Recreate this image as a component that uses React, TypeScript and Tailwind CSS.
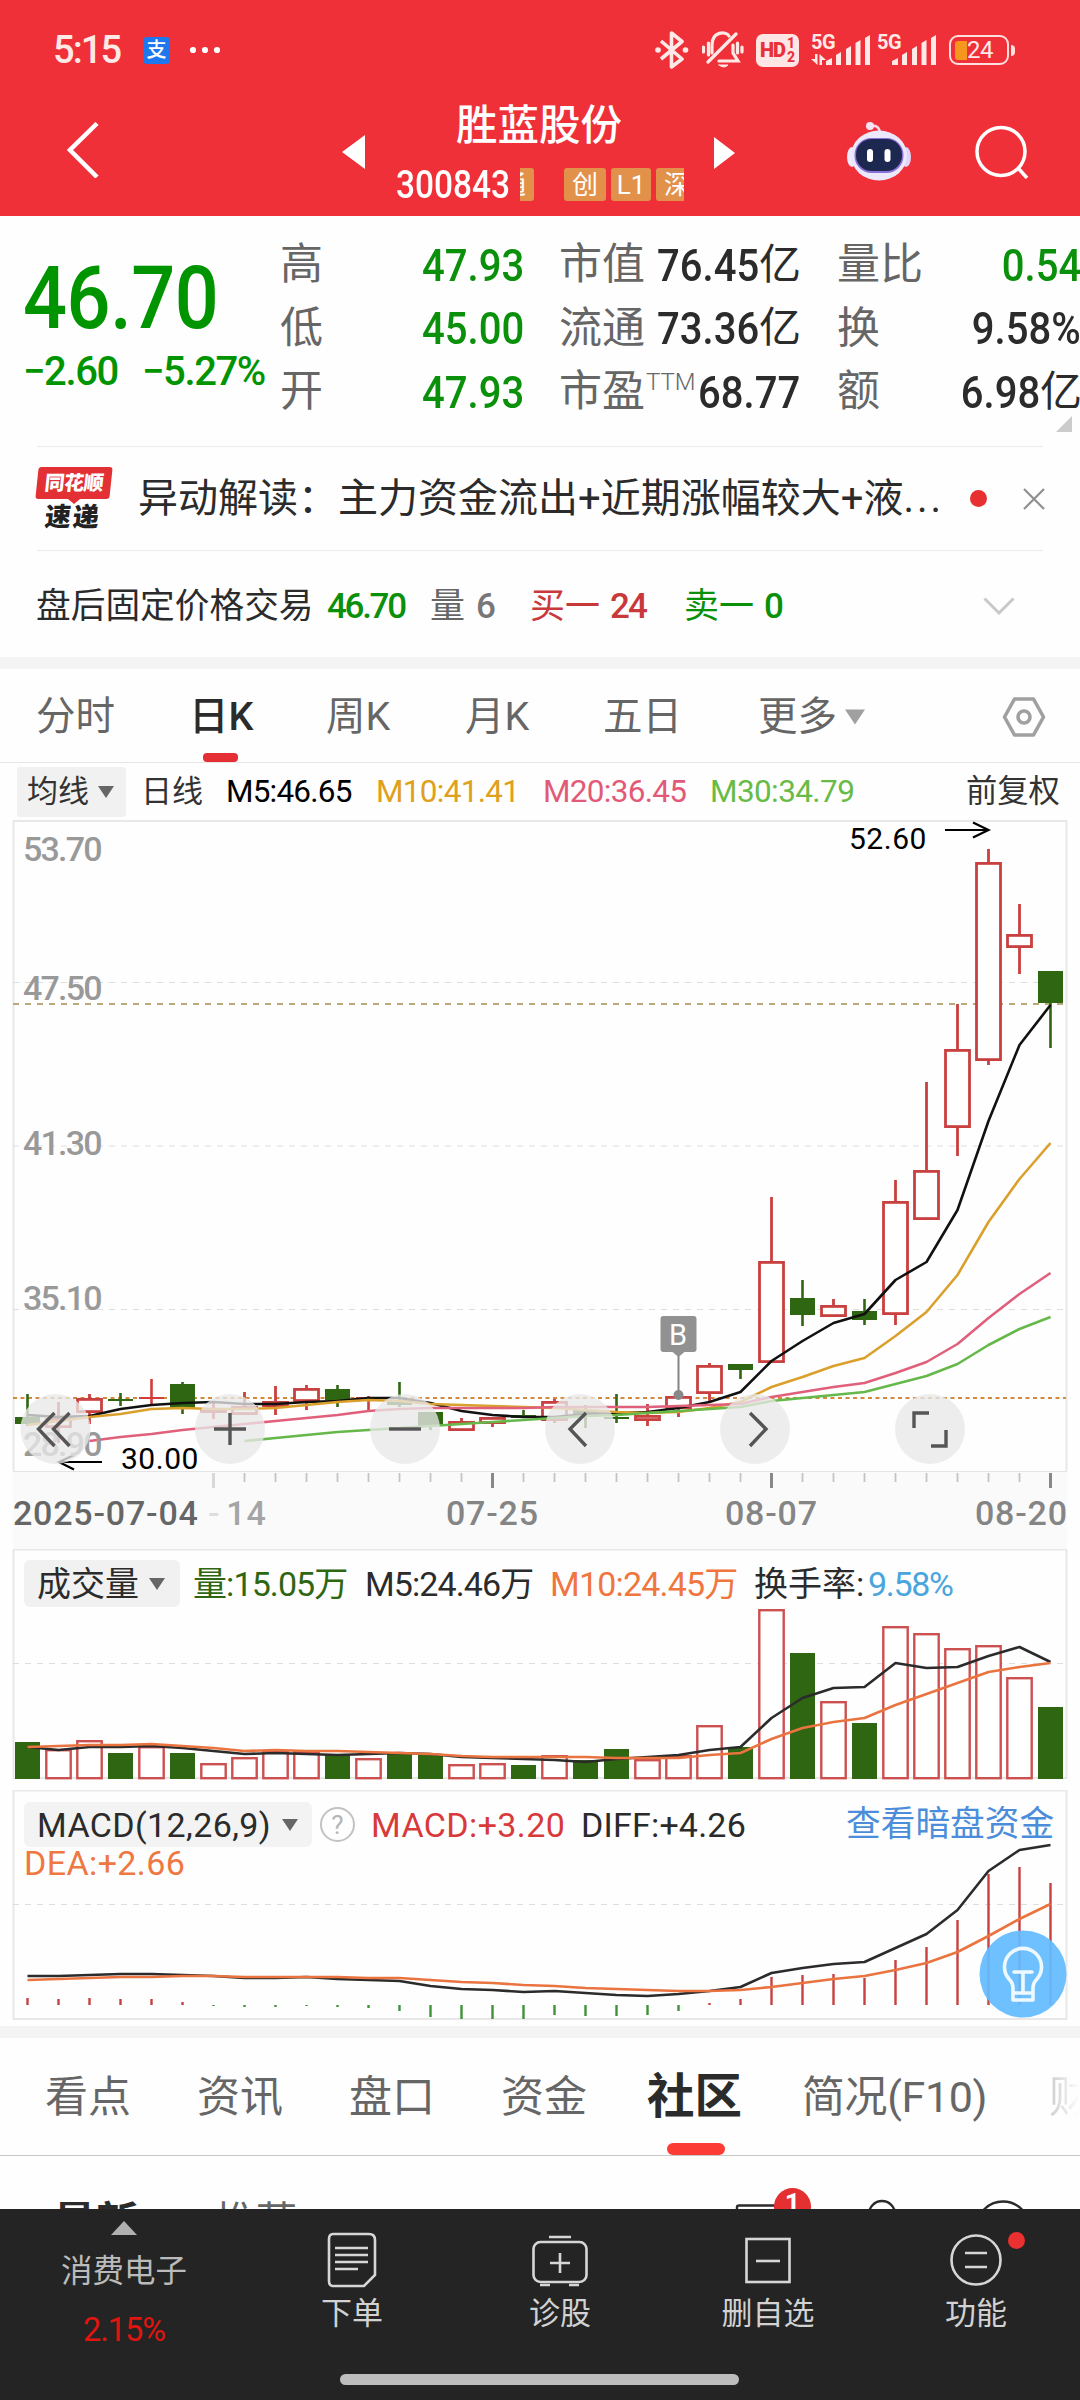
import clsx from 'clsx';
import type { ReactNode } from 'react';

type Kind = 'up' | 'down';

interface Candle {
  kind: Kind;
  high: number;
  top: number;
  bottom: number;
  low: number;
}

const UP = '#c8403f';
const DOWN = '#2f6612';
const STEP = 31;
const FIRST_X = 27.5;

const xAt = (i: number) => FIRST_X + i * STEP;

const k = (
  kind: Kind,
  high: number,
  top: number,
  bottom: number,
  low: number,
): Candle => ({ kind, high, top, bottom, low });

const candles: Candle[] = [
  k('down', 1394, 1417, 1424, 1426),
  k('up', 1402, 1418, 1428, 1443),
  k('up', 1394, 1398, 1413, 1424),
  k('down', 1393, 1399, 1401, 1406),
  k('up', 1379, 1397, 1399, 1404),
  k('down', 1382, 1384, 1408, 1414),
  k('up', 1403, 1408, 1413, 1419),
  k('up', 1392, 1406, 1415, 1415),
  k('up', 1386, 1401, 1407, 1415),
  k('up', 1385, 1388, 1402, 1410),
  k('down', 1385, 1389, 1400, 1407),
  k('up', 1396, 1397, 1399, 1410),
  k('down', 1382, 1400, 1405, 1407),
  k('down', 1412, 1412, 1426, 1430),
  k('up', 1418, 1421, 1431, 1431),
  k('up', 1417, 1417, 1424, 1427),
  k('down', 1410, 1415, 1418, 1418),
  k('up', 1399, 1401, 1421, 1423),
  k('down', 1405, 1410, 1415, 1428),
  k('down', 1394, 1417, 1419, 1423),
  k('up', 1404, 1415, 1421, 1426),
  k('up', 1396, 1396, 1409, 1417),
  k('up', 1363, 1365, 1394, 1402),
  k('down', 1364, 1364, 1370, 1379),
  k('up', 1197, 1261, 1363, 1363),
  k('down', 1280, 1298, 1315, 1326),
  k('up', 1299, 1305, 1317, 1317),
  k('down', 1299, 1311, 1320, 1325),
  k('up', 1180, 1201, 1315, 1325),
  k('up', 1082, 1170, 1220, 1220),
  k('up', 1004, 1049, 1128, 1156),
  k('up', 849, 862, 1061, 1065),
  k('up', 904, 934, 948, 974),
  k('down', 971, 971, 1003, 1048),
];

const ma5 = [
  1415, 1417, 1416, 1409, 1405, 1403, 1402, 1404, 1404, 1402, 1401, 1398, 1398,
  1403, 1411, 1415, 1417, 1417, 1414, 1413, 1412, 1408, 1402, 1392, 1361, 1341,
  1323, 1314, 1280, 1262, 1210, 1121, 1045, 1005,
];
const ma10 = [
  1425, 1421, 1417, 1414, 1409, 1408, 1409, 1409, 1408, 1405, 1402, 1400, 1401,
  1404, 1405, 1406, 1407, 1408, 1410, 1412, 1413, 1412, 1408, 1402, 1387, 1377,
  1366, 1358, 1336, 1312, 1275, 1222, 1179, 1143,
];
// starts at the third candle
const ma20 = [
  1441, 1437, 1434, 1430, 1427, 1424, 1421, 1418, 1415, 1411, 1409, 1408, 1408,
  1408, 1408, 1407, 1407, 1407, 1407, 1406, 1405, 1404, 1397, 1392, 1387, 1383,
  1373, 1362, 1344, 1318, 1294, 1273,
];
// starts at the eighth candle
const ma30 = [
  1441, 1438, 1435, 1432, 1430, 1428, 1426, 1424, 1422, 1420, 1418, 1416, 1415,
  1413, 1411, 1409, 1407, 1401, 1398, 1395, 1392, 1384, 1376, 1364, 1345, 1329,
  1317,
];

const volumes = [
  1742, 1749, 1740, 1753, 1746, 1753, 1763, 1757, 1750, 1751, 1754, 1758, 1754,
  1755, 1764, 1763, 1765, 1755, 1760, 1749, 1759, 1755, 1725, 1747, 1609, 1653,
  1701, 1723, 1626, 1633, 1648, 1645, 1677, 1707,
];
const vol5 = [
  1747, 1750, 1747, 1747, 1746, 1748, 1751, 1754, 1753, 1754, 1755, 1754, 1753,
  1754, 1757, 1758, 1759, 1760, 1762, 1759, 1757, 1755, 1750, 1747, 1718, 1698,
  1688, 1687, 1663, 1668, 1667, 1656, 1647, 1662,
];
const vol10 = [
  1747, 1746, 1745, 1745, 1744, 1746, 1748, 1751, 1750, 1751, 1751, 1752, 1753,
  1754, 1756, 1757, 1757, 1757, 1757, 1758, 1758, 1758, 1755, 1753, 1739, 1728,
  1722, 1718, 1705, 1694, 1683, 1672, 1667, 1663,
];

const MACD_ZERO = 2005;
const macdBars = [
  1998, 1999, 1998, 1999, 1999, 2002, 2006, 2007, 2007, 2006, 2007, 2008, 2011,
  2017, 2019, 2019, 2019, 2015, 2016, 2016, 2015, 2011, 2003, 1999, 1977, 1975,
  1974, 1978, 1960, 1947, 1920, 1874, 1867, 1883,
];
const diff = [
  1976, 1976, 1975, 1974, 1974, 1975, 1976, 1978, 1978, 1977, 1979, 1980, 1981,
  1986, 1989, 1990, 1992, 1991, 1993, 1995, 1996, 1994, 1991, 1987, 1973, 1968,
  1964, 1962, 1948, 1934, 1910, 1871, 1850, 1845,
];
const dea = [
  1980, 1979, 1978, 1977, 1977, 1976, 1976, 1977, 1977, 1977, 1977, 1978, 1978,
  1980, 1982, 1983, 1985, 1986, 1988, 1989, 1990, 1991, 1991, 1990, 1987, 1983,
  1979, 1976, 1970, 1963, 1952, 1936, 1919, 1904,
];

function Line({
  data,
  from = 0,
  color,
}: {
  data: number[];
  from?: number;
  color: string;
}) {
  return (
    <polyline
      points={data.map((y, i) => `${xAt(i + from)},${y}`).join(' ')}
      fill="none"
      stroke={color}
      strokeWidth="2.6"
      strokeLinejoin="round"
    />
  );
}

function Grid({ ys }: { ys: number[] }) {
  return (
    <>
      {ys.map((y) => (
        <path
          key={y}
          d={`M13 ${y}H1066`}
          stroke="#dedede"
          strokeWidth="1.2"
          strokeDasharray="6 6"
        />
      ))}
    </>
  );
}

function Caret({ className }: { className?: string }) {
  return (
    <svg
      viewBox="0 0 16 12"
      className={clsx('h-3 w-4 shrink-0 fill-[#666]', className)}
    >
      <path d="M0 0H16L8 12Z" />
    </svg>
  );
}

function StatusBar() {
  return (
    <div className="flex h-[100px] items-center pl-[53px] text-[#ffe9e7]">
      <span className="w-[90px] text-[38px] font-medium tracking-[-1.9px]">
        5:15
      </span>
      <span className="flex size-[27px] items-center justify-center rounded-sm bg-[#1d77ee] text-[20px] font-medium text-white">
        支
      </span>
      <svg viewBox="0 0 36 8" className="ml-[18px] h-2 w-9 fill-white">
        <circle cx="5" cy="4" r="3.1" />
        <circle cx="17" cy="4" r="3.1" />
        <circle cx="29" cy="4" r="3.1" />
      </svg>
      {/* bluetooth */}
      <svg
        viewBox="0 0 34 38"
        className="ml-[431px] h-[38px] w-[34px] shrink-0"
        fill="none"
        stroke="currentColor"
        strokeWidth="3.6"
        strokeLinejoin="round"
      >
        <path d="M6 10 27 28 16.5 36V2L27 10.5 6 28" />
        <circle cx="3" cy="19" r="2.8" fill="currentColor" stroke="none" />
        <circle cx="30.5" cy="19" r="2.8" fill="currentColor" stroke="none" />
      </svg>
      {/* muted bell */}
      <svg
        viewBox="0 0 42 38"
        className="ml-[13px] h-[38px] w-[42px] shrink-0"
        fill="none"
        stroke="currentColor"
        strokeWidth="3.2"
        strokeLinecap="round"
      >
        <path d="M34 3 6 31M10 22V14C10 0 24 0 27 5M17 30H36L31 22V14" />
        <path d="M1.5 16V21M6.5 12V24M35.5 12V22M40 16V21" />
        <path d="M17 34H26Q22 38 17 34Z" fill="currentColor" strokeWidth="1" />
      </svg>
      <div className="ml-3 flex h-[33px] w-[43px] shrink-0 items-center justify-center rounded-[7px] bg-[#ffe5e3] text-[#e83038]">
        <span className="text-[20px] font-black tracking-[-1px]">HD</span>
        <span className="flex flex-col pl-0.5 text-[14px] font-extrabold">
          <i className="not-italic">1</i>
          <i className="not-italic">2</i>
        </span>
      </div>
      <Signal arrows className="ml-3" />
      <Signal className="ml-1.5" />
      <div className="ml-3 flex h-[30px] w-[60px] shrink-0 items-center rounded-[9px] border-[2.5px] border-[#ffe0de] pl-1">
        <span className="h-[19px] w-3 rounded-l-[3px] bg-[#f7961e]" />
        <span className="text-[24px] tracking-[-0.5px]">24</span>
      </div>
      <span className="ml-0.5 h-[11px] w-1 rounded-r bg-[#ffe0de]" />
    </div>
  );
}

function Signal({
  arrows,
  className,
}: {
  arrows?: boolean;
  className?: string;
}) {
  return (
    <div className={clsx('relative h-[34px] w-[60px] shrink-0', className)}>
      <span className="absolute -top-px left-0 text-[20px] font-bold tracking-[-0.5px]">
        5G
      </span>
      <svg viewBox="0 0 60 34" className="size-full fill-current">
        <path d="M15 32V28L21 25V32ZM25 22 30 19V32H25ZM35 16 40 13V32H35ZM44.5 10 49.5 7V32H44.5ZM54 5 59 2V32H54Z" />
        {arrows && <path d="M4 21H6.5V32L0 26H4ZM8.5 21 15 27H11V32H8.5Z" />}
      </svg>
    </div>
  );
}

function Tag({ children, className }: { children: ReactNode; className?: string }) {
  return (
    <span
      className={clsx(
        'flex h-[33px] shrink-0 items-center justify-center rounded-[3px] bg-[#e2914b] text-[26px]',
        className,
      )}
    >
      {children}
    </span>
  );
}

function NavBar() {
  return (
    <div className="flex h-[116px] text-white">
      <svg
        viewBox="0 0 32 56"
        className="mt-[22px] ml-[67px] h-14 w-8"
        fill="none"
        stroke="currentColor"
        strokeWidth="4.5"
      >
        <path d="M30 1.5 3 28 30 55" />
      </svg>
      <svg viewBox="0 0 23 34" className="mt-[35px] ml-[243px] h-[34px] w-[23px] fill-white">
        <path d="M23 0V34L0 17Z" />
      </svg>
      <div className="ml-[31px] flex w-[288px] flex-col">
        <h1 className="mt-[5px] pl-[60px] text-[41.5px] font-medium">胜蓝股份</h1>
        <div className="mt-[19px] flex h-[38px] items-center overflow-hidden">
          <span className="w-[124px] shrink-0 pt-px">
            <span className="inline-block w-[128px] origin-left scale-x-[0.88] text-[38px] font-medium">
              300843
            </span>
          </span>
          <span className="flex h-[33px] w-3.5 shrink-0 items-center justify-end overflow-hidden rounded-r-[3px] bg-[#e2914b] text-[26px]">
            <span className="mr-[8px]">通</span>
          </span>
          <Tag className="ml-[30px] w-[42px]">创</Tag>
          <Tag className="ml-[5px] w-10">L1</Tag>
          <Tag className="ml-[5px] w-[42px]">深</Tag>
        </div>
      </div>
      <svg viewBox="0 0 21 32" className="mt-[37px] ml-[30px] h-8 w-[21px] fill-white">
        <path d="M0 0V32L21 16Z" />
      </svg>
      <svg viewBox="0 0 64 60" className="mt-[21px] ml-[112px] h-[60px] w-16">
        <path d="M33 12Q32 3 23 5" fill="none" stroke="#f3dcf2" strokeWidth="2.5" />
        <circle cx="23" cy="5" r="4" fill="#f6e3f6" />
        <ellipse cx="5" cy="36" rx="5" ry="10" fill="#f1eafd" />
        <ellipse cx="59" cy="36" rx="5" ry="10" fill="#ddd5fa" />
        <ellipse cx="32" cy="34.5" rx="28" ry="25" fill="#ece8fb" />
        <rect x="7.5" y="17" width="49" height="35" rx="17" fill="#8a6fd8" />
        <rect x="9" y="18" width="46" height="32" rx="15.5" fill="#1d2850" />
        <rect x="20" y="28" width="6" height="13" rx="3" fill="#fff" />
        <rect x="37.5" y="28" width="6" height="13" rx="3" fill="#fff" />
      </svg>
      <svg
        viewBox="0 0 54 54"
        className="mt-[25px] ml-16 size-[54px]"
        fill="none"
        stroke="currentColor"
        strokeWidth="3.5"
      >
        <circle cx="26" cy="26.5" r="24" />
        <path d="M43 43 52 53" />
      </svg>
    </div>
  );
}

const gray = 'text-[#666]';

function Quote() {
  return (
    <section className="relative flex h-[230px]">
      <div className="w-[280px] shrink-0 pl-[23px] text-[#009500]">
        <p className="mt-[38px] w-[221px] origin-left scale-x-[0.88] text-[88px] font-medium tracking-[-0.5px]">
          46.70
        </p>
        <p className="mt-[10px] flex text-[40px] font-medium tracking-[-1.4px] whitespace-nowrap">
          <span className="w-[119px]">−2.60</span>
          <span>−5.27%</span>
        </p>
      </div>
      <div className="mt-[17px] grid h-[190px] w-[800px] shrink-0 grid-cols-[244px_35px_241px_37px_244px] text-[43px]">
        <div className="flex flex-col justify-between">
          <Row label="高" value="47.93" green />
          <Row label="低" value="45.00" green />
          <Row label="开" value="47.93" green />
        </div>
        <div />
        <div className="flex flex-col justify-between">
          <Row label="市值" value="76.45" unit="亿" />
          <Row label="流通" value="73.36" unit="亿" />
          <Row
            label={
              <>
                市盈
                <sup className="relative top-[-16px] ml-px align-baseline text-[24px] leading-none font-light">
                  TTM
                </sup>
              </>
            }
            value="68.77"
          />
        </div>
        <div />
        <div className="flex flex-col justify-between">
          <Row label="量比" value="0.54" green />
          <Row label="换" value="9.58%" />
          <Row label="额" value="6.98" unit="亿" />
        </div>
      </div>
      <svg
        viewBox="0 0 16 16"
        className="absolute right-2 bottom-3.5 size-4 fill-[#ccc]"
      >
        <path d="M16 0V16H0Z" />
      </svg>
    </section>
  );
}

function Row({
  label,
  value,
  unit,
  green,
}: {
  label: ReactNode;
  value: string;
  unit?: string;
  green?: boolean;
}) {
  return (
    <div className="flex h-[63px] items-center justify-between whitespace-nowrap">
      <span className={clsx('shrink-0', gray)}>{label}</span>
      <span
        className={clsx(
          '-ml-3 flex items-center font-medium',
          green ? 'text-[#0a900a]' : 'text-[#2b2b2b]',
        )}
      >
        <span className="origin-right scale-x-[0.91] pt-[2px] text-[44px]">{value}</span>
        {unit && <span className="w-[41px] text-[42px] font-normal">{unit}</span>}
      </span>
    </div>
  );
}

function News() {
  return (
    <section className="mx-[37px] flex h-[105px] items-center border-y border-[#ececec]">
      <div className="w-[101px] shrink-0">
        <div className="flex h-8 w-[74px] -skew-x-6 items-center justify-center rounded-[3px] bg-[#e23034] text-[20px] font-black tracking-[-0.5px] text-white">
          同花顺
        </div>
        <div className="ml-[31px] size-0 border-x-[6px] border-t-[5px] border-x-transparent border-t-[#e23034]" />
        <div className="ml-2 -skew-x-6 text-[26px] font-black tracking-[2px] text-[#222]">
          速递
        </div>
      </div>
      <p className="w-[822px] shrink-0 text-[40px] whitespace-nowrap text-[#2b2b2b]">
        异动解读：主力资金流出+近期涨幅较大+液
        <span className="tracking-[3px]">...</span>
      </p>
      <span className="ml-[10px] size-[17px] shrink-0 rounded-full bg-[#e93030]" />
      <svg
        viewBox="0 0 22 22"
        className="ml-9 size-[22px] shrink-0"
        stroke="#8f8f8f"
        strokeWidth="2.2"
      >
        <path d="M1 1 21 21M21 1 1 21" />
      </svg>
    </section>
  );
}

function AfterHours() {
  return (
    <section className="flex h-[106px] items-center pt-1 pl-[36px] text-[35px] whitespace-nowrap">
      <span className="w-[291px] text-[34.7px] text-[#2b2b2b]">盘后固定价格交易</span>
      <span className="w-[103px] font-medium tracking-[-2.3px] text-[#0a900a]">46.70</span>
      <span className={clsx('w-[46px]', gray)}>量</span>
      <span className="w-[54px] font-medium text-[#777]">6</span>
      <span className="w-[80px] text-[#c8393b]">买一</span>
      <span className="w-[74px] font-medium tracking-[-2px] text-[#c8393b]">24</span>
      <span className="w-[80px] text-[#0a900a]">卖一</span>
      <span className="font-medium text-[#0a900a]">0</span>
      <svg
        viewBox="0 0 32 18"
        className="ml-[199px] h-[18px] w-8"
        fill="none"
        stroke="#c9c9c9"
        strokeWidth="3"
      >
        <path d="M1.5 1.5 16 16 30.5 1.5" />
      </svg>
    </section>
  );
}

function PeriodTabs() {
  return (
    <nav
      className={clsx(
        'flex h-[94px] items-center border-b border-[#e6e6e6] pt-0.5 pl-[36px] text-[39.5px] whitespace-nowrap',
        gray,
      )}
    >
      <span className="w-[153px]">分时</span>
      <span className="relative w-[137px] font-medium text-[#2b2b2b]">
        日K
        <i className="absolute top-[56px] left-3.5 h-[9px] w-[35px] rounded bg-[#e43035]" />
      </span>
      <span className="w-[139px]">周K</span>
      <span className="w-[138px]">月K</span>
      <span className="w-[155px]">五日</span>
      <span>更多</span>
      <Caret className="ml-2 h-4 w-5 fill-[#a0a0a0]" />
      <svg
        viewBox="0 0 44 42"
        className="ml-[137px] h-[42px] w-11"
        fill="none"
        stroke="#a0a0a0"
        strokeWidth="3.6"
        strokeLinejoin="round"
      >
        <path d="M12.5 3H31.5L41.5 21 31.5 39H12.5L2.5 21Z" />
        <circle cx="22" cy="21" r="6" />
      </svg>
    </nav>
  );
}

function MaLegend() {
  return (
    <div className="flex h-[57px] items-center pl-[17px] text-[31.5px] whitespace-nowrap">
      <span className="flex h-[50px] w-[124px] items-center text-[31px] text-[#333]">
        <span className="flex h-full w-[109px] items-center rounded-[3px] bg-[#f1f1f1] pl-2.5">
          均线
          <Caret className="ml-[9px]" />
        </span>
      </span>
      <span className="w-[85px] text-[31px] text-[#333]">日线</span>
      <span className="w-[150px] tracking-[-0.8px] text-black">M5:46.65</span>
      <span className="w-[167px] tracking-[-0.7px] text-[#dfa01c]">M10:41.41</span>
      <span className="w-[167px] tracking-[-0.7px] text-[#e25a78]">M20:36.45</span>
      <span className="w-[256px] tracking-[-0.6px] text-[#68bb47]">M30:34.79</span>
      <span className="text-[31.3px] text-[#333]">前复权</span>
    </div>
  );
}

const priceLabels = [
  { text: '53.70', cls: 'top-[12px]' },
  { text: '47.50', cls: 'top-[151px]' },
  { text: '41.30', cls: 'top-[306px]' },
  { text: '35.10', cls: 'top-[461px]' },
  { text: '28.90', cls: 'top-[607px]' },
];

const chartButtons = [
  { x: 55.5, d: 'M-1-16-17 0-1 17M14-16-2 0 14 17' },
  { x: 230, d: 'M-16 0H16M0-16V16' },
  { x: 405, d: 'M-16 0H16' },
  { x: 580, d: 'M6-16-10 0 6 17' },
  { x: 755, d: 'M-5-16 11 0-5 17' },
  { x: 930, d: 'M-16-1V-16H-1M16 1V17H1' },
];

function PriceChart() {
  return (
    <div className="relative h-[652px]">
      <svg viewBox="0 820 1080 652" className="block h-[652px] w-[1080px]">
        <path d="M13.5 1471V821H1066.5V1471" fill="none" stroke="#e8e8e8" strokeWidth="2" />
        <path d="M13 1471.5H1067" stroke="#e4e4e4" />
        <Grid ys={[982.5, 1146, 1309.5]} />
        <path d="M13 1004H1066" stroke="#bba878" strokeWidth="2" strokeDasharray="6 6" />
        <path d="M13 1398H1066" stroke="#d48a3c" strokeWidth="2" strokeDasharray="4 3.5" />
        {candles.map((c, i) => {
          const x = xAt(i);
          const thin = c.bottom - c.top < 4;
          if (c.kind === 'down' || thin) {
            const color = c.kind === 'down' ? DOWN : '#d23c3c';
            return (
              <g key={i} fill={color}>
                <rect x={x - 1.3} y={c.high} width="2.6" height={c.low - c.high} />
                <rect x={x - 12.5} y={c.top} width="25" height={c.bottom - c.top} />
              </g>
            );
          }
          return (
            <g key={i} fill="none" stroke={UP} strokeWidth="2.8">
              <path d={`M${x} ${c.high}V${c.top}M${x} ${c.bottom}V${c.low}`} />
              <rect
                x={x - 12}
                y={c.top + 1.4}
                width="24"
                height={c.bottom - c.top - 2.8}
                fill="#fff"
              />
            </g>
          );
        })}
        <Line data={ma5} color="#111" />
        <Line data={ma10} color="#dba02c" />
        <Line data={ma20} from={2} color="#e0607c" />
        <Line data={ma30} from={7} color="#66b84a" />
        {/* trade marker */}
        <path d="M678.5 1352V1395" stroke="#858585" strokeWidth="2" />
        <circle cx="678.5" cy="1395" r="5" fill="#888" />
        <rect x="660.5" y="1316" width="36" height="36" rx="3" fill="#919191" />
        <path d="M672 1351.5H685L678.5 1357Z" fill="#919191" />
        {/* high and low arrows */}
        <g fill="none" stroke="#000" strokeWidth="2.2">
          <path d="M945 830H988M973 822.5 988.5 830 973 837.5" />
          <path d="M102 1462H60M74 1469.5 59 1462 74 1455" />
        </g>
      </svg>
      {priceLabels.map(({ text, cls }) => (
        <span
          key={text}
          className={clsx(
            'absolute left-[23px] text-[34px] font-medium tracking-[-1.8px] text-[#999]',
            cls,
          )}
        >
          {text}
        </span>
      ))}
      <span className="absolute top-[4px] left-[849px] text-[30px] tracking-[0.5px] text-black">
        52.60
      </span>
      <span className="absolute top-[624px] left-[121px] text-[30px] tracking-[0.5px] text-black">
        30.00
      </span>
      <span className="absolute top-[501px] left-[669px] text-[29px] text-white">B</span>
      <svg
        viewBox="0 820 1080 652"
        className="absolute top-0 left-0 h-[652px] w-[1080px]"
      >
        {chartButtons.map(({ x, d }) => (
          <g key={x} transform={`translate(${x} 1429)`}>
            <circle r="35" fill="#e9e8e8" fillOpacity="0.78" />
            <path d={d} fill="none" stroke="#555" strokeWidth="3.4" />
          </g>
        ))}
      </svg>
    </div>
  );
}

function DateAxis() {
  return (
    <div className="relative mx-[13px] flex h-[77px] bg-[#fafafb] text-[34px] font-medium tracking-[0.8px] whitespace-nowrap text-[#858585]">
      <svg viewBox="13 1472 1054 20" className="absolute top-0 left-0 h-5 w-[1054px]">
        {candles.slice(6).map((_, n) => {
          const i = n + 6;
          const major = (i - 6) % 9 === 0;
          return (
            <path
              key={i}
              d={`M${xAt(i)} 1473V${major ? 1488 : 1482}`}
              stroke={i === 6 ? '#d8d8d8' : major ? '#888' : '#c4c4c4'}
              strokeWidth={major ? 3 : 1.8}
            />
          );
        })}
      </svg>
      <span className="mt-[24px] w-[195px] shrink-0 text-[#666]">2025-07-04</span>
      <span className="mt-[24px] w-[238px] shrink-0">
        <i className="text-[#ddd] not-italic">-</i>
        <i className="ml-1.5 text-[#a5a5a5] not-italic">14</i>
      </span>
      <span className="mt-[24px] w-[279px] shrink-0">07-25</span>
      <span className="mt-[24px] w-[250px] shrink-0">08-07</span>
      <span className="mt-[24px] shrink-0">08-20</span>
    </div>
  );
}

function VolumePanel() {
  return (
    <div className="relative h-[241px]">
      <svg viewBox="0 1549 1080 241" className="block h-[241px] w-[1080px]">
        <path
          d="M13.5 1778V1549.5H1066.5V1778Z"
          fill="#fefefe"
          stroke="#e8e8e8"
          strokeWidth="2"
        />
        <Grid ys={[1663.5]} />
        {volumes.map((y, i) => {
          const x = xAt(i);
          return candles[i].kind === 'down' ? (
            <rect key={i} x={x - 12.5} y={y} width="25" height={1779 - y} fill={DOWN} />
          ) : (
            <rect
              key={i}
              x={x - 12.2}
              y={y + 1.2}
              width="24.4"
              height={1777 - y}
              fill="#fff"
              stroke="#cc5050"
              strokeWidth="2.4"
            />
          );
        })}
        <Line data={vol5} color="#2b2b2b" />
        <Line data={vol10} color="#ea7440" />
      </svg>
      <div className="absolute top-[11px] left-6 flex h-[47px] items-center text-[34px] whitespace-nowrap text-[#2b2b2b]">
        <span className="mr-[13px] flex h-full w-[156px] items-center rounded-md bg-[#f1f1f1] pl-[13px]">
          成交量
          <Caret className="ml-2.5" />
        </span>
        <span className="w-[172px] tracking-[-0.9px] text-[#2f6612]">量:15.05万</span>
        <span className="w-[185px] tracking-[-0.9px]">M5:24.46万</span>
        <span className="w-[204px] tracking-[-0.8px] text-[#f0763f]">M10:24.45万</span>
        <span className="w-[114px]">换手率:</span>
        <span className="tracking-[-1.3px] text-[#4aa5dd]">9.58%</span>
      </div>
    </div>
  );
}

function MacdPanel() {
  return (
    <div className="relative h-[236px]">
      <svg viewBox="0 1790 1080 236" className="block h-[236px] w-[1080px]">
        <path
          d="M13.5 2019V1790.5H1066.5V2019Z"
          fill="#fefefe"
          stroke="#e8e8e8"
          strokeWidth="2"
        />
        <Grid ys={[1904.5]} />
        {macdBars.map((y, i) => (
          <path
            key={i}
            d={`M${xAt(i)} ${MACD_ZERO}V${y}`}
            stroke={y < MACD_ZERO ? '#c8403f' : '#3f9238'}
            strokeWidth="2.4"
          />
        ))}
        <Line data={diff} color="#2b2b2b" />
        <Line data={dea} color="#ea7440" />
      </svg>
      <div className="absolute top-3 left-6 flex h-[45px] items-center text-[34px] whitespace-nowrap text-[#2b2b2b]">
        <span className="flex h-full w-[288px] items-center rounded-md bg-[#f2f3f2] pl-[13px]">
          <span className="w-[245px] tracking-[0.4px]">MACD(12,26,9)</span>
          <Caret />
        </span>
        <span className="ml-2 flex size-[35px] items-center justify-center rounded-full border-2 border-[#c2c2c2] text-[26px] text-[#b5b5b5]">
          ?
        </span>
        <span className="ml-[16px] w-[210px] tracking-[0.4px] text-[#d8393a]">MACD:+3.20</span>
        <span className="w-[265px] tracking-[0.2px]">DIFF:+4.26</span>
        <span className="text-[34.7px] text-[#4c8ddb]">查看暗盘资金</span>
      </div>
      <span className="absolute top-[56px] left-[24px] text-[34px] tracking-[0.4px] text-[#ee7742]">
        DEA:+2.66
      </span>
      <svg viewBox="-44 -44 88 88" className="absolute top-[140px] left-[979px] size-[88px]">
        <circle r="43.5" fill="#63bbff" fillOpacity="0.93" />
        <g fill="none" stroke="#eef9ff" strokeWidth="3.6" strokeLinecap="round" strokeLinejoin="round">
          <path d="M-10 14Q-10 9-14 5A18.5 18.5 0 1 1 14 5Q10 9 10 14V26H-10ZM-10 19H10M-9-2H9M0-2V17" />
        </g>
      </svg>
    </div>
  );
}

function ContentTabs() {
  return (
    <nav
      className={clsx(
        'flex h-[118px] items-center border-b border-[#c8c8c8] pt-0.5 pl-[45px] text-[43px] whitespace-nowrap',
        gray,
      )}
    >
      <span className="w-[152px]">看点</span>
      <span className="w-[152px]">资讯</span>
      <span className="w-[152px]">盘口</span>
      <span className="w-[146px]">资金</span>
      <span className="relative w-[155px] text-[47.5px] font-bold text-[#2b2b2b]">
        社区
        <i className="absolute top-[69px] left-[20px] h-3 w-[58px] rounded-full bg-[#fc3b34]" />
      </span>
      <span className="w-[247px] tracking-[-0.4px]">简况(F10)</span>
      <span className="w-[31px] overflow-hidden bg-gradient-to-r from-[#ccc] to-white bg-clip-text text-transparent">
        财
      </span>
    </nav>
  );
}

function PostsPeek() {
  return (
    <div className="flex h-[53px] items-start overflow-hidden pl-[53px] text-[43px] whitespace-nowrap">
      <span className="mt-[46px] w-[162px] font-bold text-[#2b2b2b]">最新</span>
      <span className={clsx('mt-[46px] w-[520px] text-[41px]', gray)}>推荐</span>
      <div className="relative mt-8 h-[37px] w-[300px]">
        <svg
          viewBox="735 2188 300 37"
          className="h-[37px] w-[300px]"
          fill="none"
          stroke="#2b2b2b"
          strokeWidth="2.4"
        >
          <path d="M737 2225V2207Q737 2205.5 739 2205.5H790" />
          <circle cx="882" cy="2214" r="13" />
          <circle cx="1003" cy="2228" r="26.5" />
        </svg>
        <span className="absolute top-0 left-[39px] flex size-[37px] items-center justify-center rounded-full bg-[#e43030] pb-1 text-[27px] font-bold text-white">
          1
        </span>
      </div>
    </div>
  );
}

const actions = [
  {
    label: '下单',
    icon: (
      <>
        <path d="M9 3H45Q51 3 51 9V44L40 55H9Q5 55 5 50V8Q5 3 9 3Z" />
        <path d="M11 17H44M11 24H44M11 31H44M11 38H34" />
      </>
    ),
  },
  {
    label: '诊股',
    icon: (
      <>
        <rect x="1.5" y="11" width="53" height="40" rx="7" />
        <path d="M17 6H39M18 32H38M28 22V42M8 54H18M37 54H47" />
      </>
    ),
  },
  {
    label: '删自选',
    icon: (
      <>
        <rect x="6.5" y="8" width="43" height="43" />
        <path d="M16 30H40" />
      </>
    ),
  },
  {
    label: '功能',
    icon: (
      <>
        <circle cx="28" cy="29" r="24.5" />
        <path d="M17 22H39M17 36H39" />
      </>
    ),
  },
];

function BottomBar() {
  return (
    <footer className="relative flex h-[191px] bg-[#242424] text-[31px] text-[#d2d2d2]">
      <div className="flex w-[248px] flex-col items-center">
        <svg viewBox="0 0 26 14" className="mt-3 h-3.5 w-[26px] fill-[#b0b0b0]">
          <path d="M13 0 26 14H0Z" />
        </svg>
        <span className="mt-[21px] text-[31.5px] text-[#bbb]">消费电子</span>
        <span className="mt-[26px] text-[32.5px] tracking-[-1px] text-[#e0150f]">2.15%</span>
      </div>
      {actions.map(({ label, icon }) => (
        <div key={label} className="relative flex w-52 flex-col items-center">
          <svg
            viewBox="0 0 56 58"
            className="mt-[22px] h-[58px] w-14"
            fill="none"
            stroke="#d6d6d6"
            strokeWidth="2.6"
          >
            {icon}
          </svg>
          <span className="mt-[9px]">{label}</span>
          {label === '功能' && (
            <i className="absolute top-[23px] left-[136px] size-[17px] rounded-full bg-[#ea3030]" />
          )}
        </div>
      ))}
      <i className="absolute bottom-[15px] left-[340px] h-[11px] w-[399px] rounded-full bg-[#bdbdbd]" />
    </footer>
  );
}

export default function App() {
  return (
    <main className="flex h-[2400px] w-[1080px] flex-col overflow-hidden bg-[#fefefe] font-['Roboto','Noto_Sans_CJK_SC',sans-serif] leading-none [&_*]:leading-none">
      <header className="bg-[#f03038]">
        <StatusBar />
        <NavBar />
      </header>
      <Quote />
      <News />
      <AfterHours />
      <div className="h-3 bg-[#f4f4f4]" />
      <PeriodTabs />
      <MaLegend />
      <PriceChart />
      <DateAxis />
      <VolumePanel />
      <MacdPanel />
      <div className="h-3 bg-[#f4f4f4]" />
      <ContentTabs />
      <PostsPeek />
      <BottomBar />
    </main>
  );
}
